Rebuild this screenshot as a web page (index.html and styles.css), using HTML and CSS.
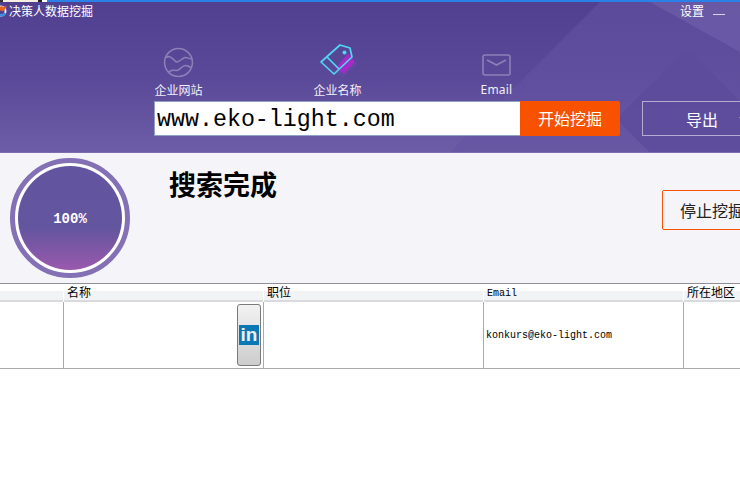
FILE: index.html
```html
<!DOCTYPE html>
<html lang="zh">
<head>
<meta charset="utf-8">
<title>决策人数据挖掘</title>
<link rel="stylesheet" href="styles.css">
</head>
<body>
<div class="app">
  <div class="topline"></div>
  <header class="head">
    <svg class="decor" width="740" height="150" viewBox="0 0 740 150" aria-hidden="true">
      <path d="M600 0H740V150H450Z" fill="#6553a2" opacity=".55"/>
      <path d="M650 0H740V50Z" fill="#7160ab" opacity=".6"/>
      <rect x="640" y="60" width="130" height="100" rx="8" transform="rotate(45 680 110)" fill="#5d4b9b" opacity=".8"/>
    </svg>
    <div class="titlebar">
      <div class="brand">
        <svg class="logo" width="14" height="14" viewBox="0 0 14 14" aria-hidden="true">
          <circle cx="6" cy="7" r="4.5" fill="none" stroke="#e9eef8" stroke-width="2"/>
          <path d="M2 6A4.5 4.5 0 0 1 9 3L12 2 9 7Z" fill="#e9661c"/>
          <path d="M2 9A4.5 4.5 0 0 0 10 9" fill="none" stroke="#2f8de0" stroke-width="2"/>
        </svg>
        <span>决策人数据挖掘</span>
      </div>
      <div class="winctl">
        <span>设置</span>
        <i class="minimize"></i>
      </div>
    </div>
    <nav class="tabs">
      <div class="tab">
        <svg width="31" height="31" viewBox="0 0 32 32" aria-hidden="true" fill="none" stroke="#8d7fb8" stroke-width="1.6">
          <circle cx="16" cy="16" r="14.4"/>
          <path d="M3 11C7 8 10 12 13 15 16 17 19 12 22 11 25 10 27 13 30 12"/>
          <path d="M6 26C9 22 12 25 15 24 18 23 20 19 23 19 26 19 27 21 29 21"/>
        </svg>
        <span>企业网站</span>
      </div>
      <div class="tab">
        <svg width="38" height="34" viewBox="0 0 38 34" aria-hidden="true">
          <path d="M15 28 31 13 38 20 24 34Z" fill="#5f4a9e"/>
          <path d="M17 24 29 9 36 18 25 30Z" fill="#a32bc8"/>
          <path d="M2 18 21 1 31 4 33 13 15 30Z" fill="none" stroke="#4fd6f2" stroke-width="1.7" stroke-linejoin="round"/>
          <path d="M8 13 20 25" fill="none" stroke="#4fd6f2" stroke-width="1.7"/>
          <circle cx="25.500" cy="8.500" r="2" fill="#4fd6f2"/>
        </svg>
        <span>企业名称</span>
      </div>
      <div class="tab">
        <svg width="30" height="24" viewBox="0 0 30 24" aria-hidden="true" fill="none" stroke="#8d7fb8" stroke-width="1.6">
          <rect x="1" y="1" width="27" height="20" rx="2"/>
          <path d="M5 6 14.500 11 24 6"/>
        </svg>
        <span class="latin">Email</span>
      </div>
    </nav>
    <div class="searchrow">
      <input class="search" type="text" value="www.eko-light.com" aria-label="搜索">
      <button class="go" type="button">开始挖掘</button>
      <button class="export" type="button">导出</button>
    </div>
  </header>
  <section class="status">
    <div class="ring"><div class="disc">100%</div></div>
    <h1>搜索完成</h1>
    <button class="stop" type="button">停止挖掘</button>
  </section>
  <section class="table">
    <div class="thead">
      <div class="cell"></div>
      <div class="cell">名称</div>
      <div class="cell">职位</div>
      <div class="cell mono">Email</div>
      <div class="cell">所在地区</div>
    </div>
    <div class="trow">
      <div class="cell"></div>
      <div class="cell namecell">
        <div class="lnbtn"><span class="ln">in</span></div>
      </div>
      <div class="cell"></div>
      <div class="cell mono emailcell">konkurs@eko-light.com</div>
      <div class="cell"></div>
    </div>
  </section>
</div>
</body>
</html>
```
FILE: styles.css
```css
* { box-sizing: border-box; }
html, body { margin: 0; height: 100%; background: #fff; overflow: hidden; }
body { font-family: "Noto Sans CJK SC", "Noto Sans", sans-serif; font-size: 12px; color: #000; }
.app { width: 740px; height: 486px; overflow: hidden; display: flex; flex-direction: column; }
.topline {
  height: 2px; flex: none;
  background: linear-gradient(90deg, #333 0 3px, #f4efe0 3px 38px, #222 38px 42px, #fff 42px 47px, #2a80e6 47px);
}
.head {
  position: relative; flex: none; height: 150px; width: 740px; overflow: hidden;
  background: linear-gradient(180deg, #514090 0%, #5a4998 50%, #6d5ca6 100%);
  color: #fff;
}
.decor { position: absolute; left: 0; top: 0; }
.titlebar { position: relative; display: flex; justify-content: space-between; height: 18px; align-items: center; }
.brand { display: flex; align-items: center; margin-left: -5px; line-height: 16px; }
.logo { flex: none; }
.winctl { display: flex; align-items: center; gap: 9px; margin-right: 15px; line-height: 16px; }
.minimize { display: block; width: 12px; height: 1px; background: #d8d2e8; margin-top: 6px; }
.tabs { position: relative; display: flex; margin-top: 23px; margin-left: 99px; height: 55px; }
.tab { width: 159px; height: 55px; display: flex; flex-direction: column; align-items: center; justify-content: flex-end; }
.tab span { display: block; height: 16px; line-height: 16px; margin-top: 4px; color: #f2eff8; }
.tab .latin { font-family: "Noto Sans", sans-serif; letter-spacing: .2px; }
.searchrow { position: relative; display: flex; margin-left: 154px; margin-top: 3px; height: 35px; }
.search {
  flex: none; width: 366px; height: 35px; border: 1px solid #8ea0c4; border-right: 0; background: #fff; padding: 3px 2px 0;
  font-family: "Liberation Mono", monospace; font-size: 23.300px; color: #000; outline: 0;
}
.go {
  flex: none; width: 100px; height: 35px; border: 0; border-radius: 0 2px 2px 0; background: #f85200; color: #fff;
  font: 16px "Noto Sans CJK SC", sans-serif; padding: 0 0 2px;
}
.export {
  position: relative; flex: none; width: 130px; height: 35px; margin-left: 22px; background: transparent; border: 1px solid #b5acd4;
  color: #fff; font: 16px "Noto Sans CJK SC", sans-serif; padding: 0 10px 0 0;
}
.export::after {
  content: ""; position: absolute; left: 96px; top: 15px; border: 4px solid transparent; border-top-color: #d8d2e8;
}
.status { position: relative; flex: none; height: 131px; width: 740px; background: #f4f4f9; display: flex; overflow: hidden; border-top: 1px solid #7d6db0; }
.ring {
  flex: none; width: 120px; height: 120px; margin: 5px 0 0 10px; border-radius: 50%;
  border: 5px solid #8470b4; padding: 3px; background: #fff;
}
.disc {
  width: 100%; height: 100%; border-radius: 50%; display: flex; align-items: center; justify-content: center; padding-top: 2px;
  background: linear-gradient(180deg, #63549f 0%, #64559f 60%, #9a59ad 100%);
  color: #fff; font: bold 14px "Liberation Mono", monospace;
}
h1 { margin: 13px 0 0 39px; font-size: 27px; line-height: 36px; font-weight: 700; flex: none; }
.stop {
  flex: none; position: absolute; left: 662px; top: 37px; width: 130px; height: 40px; border: 1px solid #f85200; border-radius: 2px;
  background: transparent; color: #222; font: 16px "Noto Sans CJK SC", sans-serif; padding: 0 0 0 17px; text-align: left;
}
.table { flex: none; width: 800px; border-top: 1px solid #8f8f9a; }
.thead, .trow { display: grid; grid-template-columns: 64px 200px 220px 200px 116px; }
.thead { height: 18px; background: linear-gradient(180deg, #fff 0 7px, #f2f3f5 7px); border-bottom: 2px solid #d9d9de; line-height: 16px; }
.thead .cell { padding-left: 3px; border-right: 1px solid #fff; }
.trow { height: 67px; border-bottom: 1px solid #aaa; }
.trow .cell { border-right: 1px solid #aaa; }
.mono { font-family: "Liberation Mono", monospace; font-size: 10px; }
.thead .mono { line-height: 19px; }
.emailcell { display: flex; align-items: center; padding-left: 2px; }
.namecell { display: flex; justify-content: flex-end; align-items: center; padding-right: 2px; }
.lnbtn {
  width: 24px; height: 62px; border: 1px solid #7a7a7a; border-radius: 3px;
  background: linear-gradient(180deg, #f2f2f2, #cdcdcd);
  display: flex; align-items: center; justify-content: center;
}
.ln {
  width: 20px; height: 20px; background: #0a78b5; color: #e8eef2; font: bold 19px/19px "Liberation Sans", sans-serif; text-align: center;
}
```
